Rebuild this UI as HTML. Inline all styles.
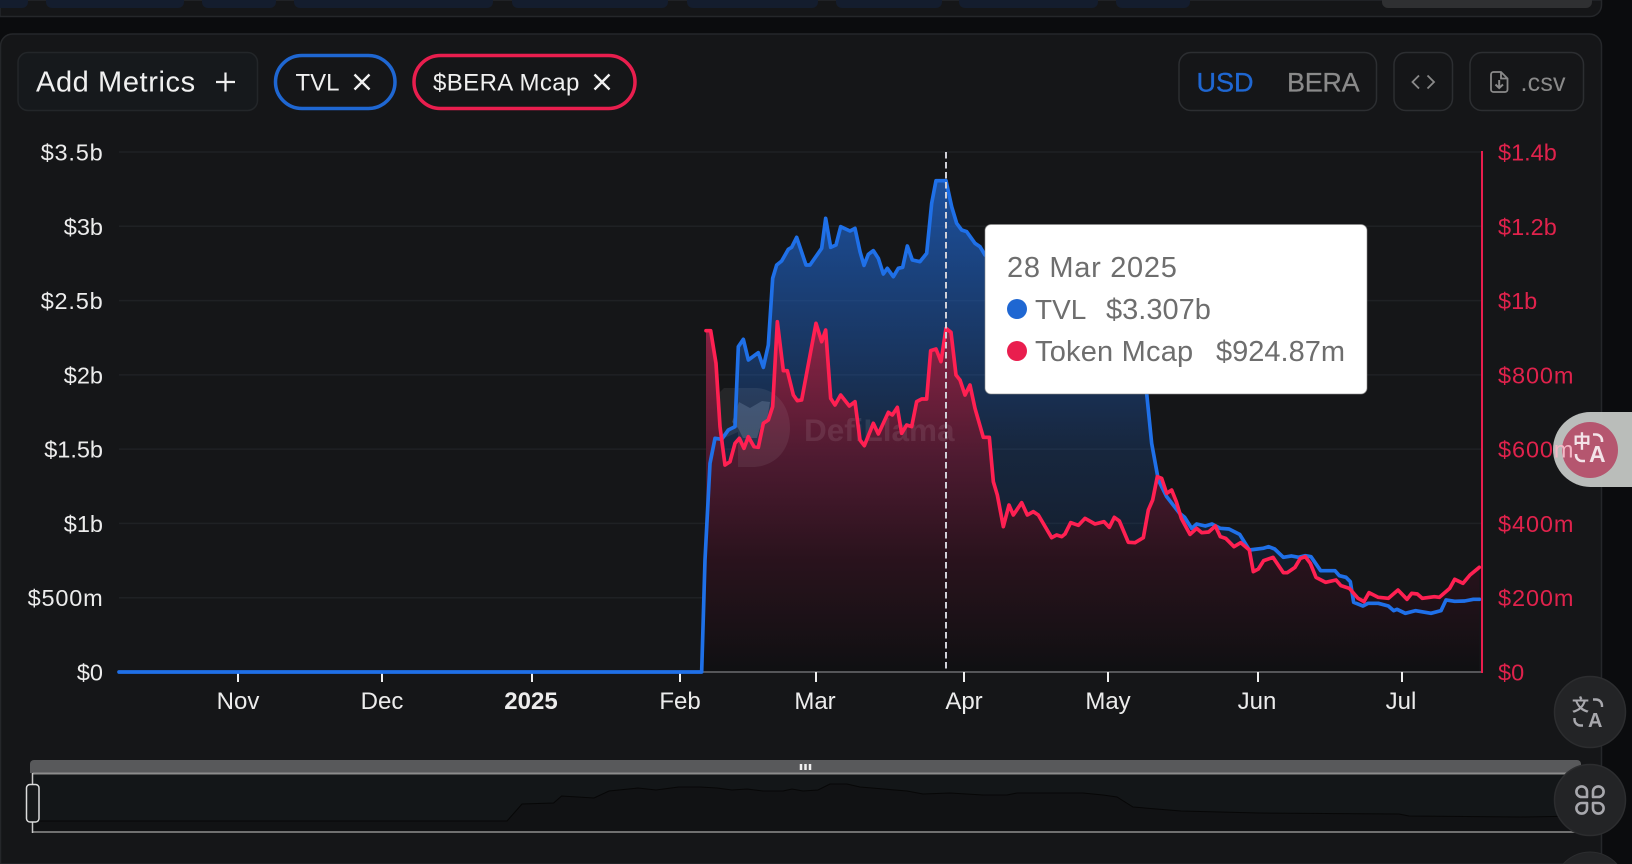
<!DOCTYPE html>
<html><head><meta charset="utf-8"><title>Chart</title>
<style>
html,body{margin:0;padding:0;background:#0b0c0e;width:1632px;height:864px;overflow:hidden}
svg{display:block;font-family:"Liberation Sans","Noto Sans CJK SC",sans-serif}
</style></head><body>
<svg width="1632" height="864" viewBox="0 0 1632 864" xmlns="http://www.w3.org/2000/svg">
<defs>
<linearGradient id="gb" gradientUnits="userSpaceOnUse" x1="0" y1="62" x2="0" y2="1536">
<stop offset="0" stop-color="#1f67d2" stop-opacity=".72"/>
<stop offset=".25" stop-color="#1f67d2" stop-opacity=".48"/>
<stop offset=".55" stop-color="#1f67d2" stop-opacity=".2"/>
<stop offset="1" stop-color="#000" stop-opacity=".3"/>
</linearGradient>
<linearGradient id="gr" gradientUnits="userSpaceOnUse" x1="0" y1="485" x2="0" y2="1536">
<stop offset="0" stop-color="#96234a" stop-opacity=".92"/>
<stop offset=".11" stop-color="#82203e" stop-opacity=".94"/>
<stop offset=".39" stop-color="#501a30" stop-opacity=".96"/>
<stop offset=".68" stop-color="#2a121c" stop-opacity=".97"/>
<stop offset="1" stop-color="#0f1012" stop-opacity=".98"/>
</linearGradient>
<clipPath id="pm"><rect x="1553" y="412" width="40" height="75"/></clipPath>
</defs>

<rect width="1632" height="864" fill="#0b0c0e"/>
<!-- top strip -->
<path d="M0 0H1601.500V5a11.500 11.500 0 0 1 -11.500 11.500H0Z" fill="#151618" stroke="#25272a" stroke-width="1.500"/>
<g fill="#141d2e">
<path d="M0 0H28V2a6 6 0 0 1 -6 6H0Z"/>
<path d="M46 0H184V2a6 6 0 0 1 -6 6H52a6 6 0 0 1 -6 -6Z"/>
<path d="M202 0H276V2a6 6 0 0 1 -6 6H208a6 6 0 0 1 -6 -6Z"/>
<path d="M294 0H493V2a6 6 0 0 1 -6 6H300a6 6 0 0 1 -6 -6Z"/>
<path d="M512 0H668V2a6 6 0 0 1 -6 6H518a6 6 0 0 1 -6 -6Z"/>
<path d="M687 0H818V2a6 6 0 0 1 -6 6H693a6 6 0 0 1 -6 -6Z"/>
<path d="M836 0H942V2a6 6 0 0 1 -6 6H842a6 6 0 0 1 -6 -6Z"/>
<path d="M959 0H1098V2a6 6 0 0 1 -6 6H965a6 6 0 0 1 -6 -6Z"/>
<path d="M1116 0H1190V2a6 6 0 0 1 -6 6H1122a6 6 0 0 1 -6 -6Z"/>
</g>
<path d="M1382 0H1592V2a6 6 0 0 1 -6 6H1388a6 6 0 0 1 -6 -6Z" fill="#2f3032"/>

<!-- panel -->
<path d="M0.500 864V46a12 12 0 0 1 12 -12H1589.500a12 12 0 0 1 12 12V864Z" fill="#151618" stroke="#25272a" stroke-width="1.500"/>

<!-- left controls -->
<rect x="18" y="52.500" width="239.500" height="58" rx="10" fill="#16191c" stroke="#232629" stroke-width="1.500"/>
<text x="36" y="91.500" font-size="29" letter-spacing=".6" fill="#f0f0f0">Add Metrics</text>
<path d="M225.500 72.500V91.500M216 82H235" stroke="#f0f0f0" stroke-width="2.200" fill="none"/>

<rect x="275.500" y="55.500" width="119.500" height="53" rx="26.500" fill="none" stroke="#1f67d2" stroke-width="3.500"/>
<text x="295.500" y="90.500" font-size="24" fill="#f0f0f0">TVL</text>
<path d="M354.500 74.500L369.500 89.500M369.500 74.500L354.500 89.500" stroke="#f0f0f0" stroke-width="2.400" fill="none"/>

<rect x="414" y="55.500" width="221" height="53" rx="26.500" fill="none" stroke="#e91e4e" stroke-width="3.500"/>
<text x="433" y="90.500" font-size="24" letter-spacing=".4" fill="#f0f0f0">$BERA Mcap</text>
<path d="M594.500 74.500L609.500 89.500M609.500 74.500L594.500 89.500" stroke="#f0f0f0" stroke-width="2.400" fill="none"/>

<!-- right controls -->
<rect x="1179" y="52.500" width="197.500" height="58" rx="12" fill="none" stroke="#2c2e31" stroke-width="1.500"/>
<text x="1196.500" y="91.500" font-size="27" fill="#1f67d2" stroke="#1f67d2" stroke-width=".35">USD</text>
<text x="1287" y="91.500" font-size="27" letter-spacing="-.3" fill="#8a8a8a" stroke="#8a8a8a" stroke-width=".25">BERA</text>
<rect x="1394" y="52.500" width="58.500" height="58" rx="12" fill="none" stroke="#2c2e31" stroke-width="1.500"/>
<path d="M1419 75.500L1412.500 82L1419 88.500M1427.500 75.500L1434 82L1427.500 88.500" stroke="#8a8a8a" stroke-width="1.800" fill="none"/>
<rect x="1470" y="52.500" width="113.500" height="58" rx="12" fill="none" stroke="#2c2e31" stroke-width="1.500"/>
<path d="M1493.500 72H1501L1507.500 78.500V89.500a2.500 2.500 0 0 1 -2.500 2.500H1493.500a2.500 2.500 0 0 1 -2.500 -2.500V74.500a2.500 2.500 0 0 1 2.500 -2.500ZM1501 72V78.500H1507.500" fill="none" stroke="#8a8a8a" stroke-width="1.800"/>
<path d="M1499.200 80V87.500M1495.500 84.500L1499.200 88L1503 84.500" fill="none" stroke="#8a8a8a" stroke-width="2"/>
<text x="1520.500" y="91" font-size="25" letter-spacing=".2" fill="#8a8a8a">.csv</text>

<!-- grid -->
<g stroke="#1f2124" stroke-width="1.500">
<path d="M119 152H1481M119 226.300H1481M119 300.600H1481M119 374.900H1481M119 449.100H1481M119 523.400H1481M119 597.700H1481"/>
</g>

<!-- series -->
<g transform="translate(680 160) scale(.33333)" stroke-linejoin="round" stroke-linecap="round">
<path fill="url(#gb)" d="M65 1536L75 1200 90 910 105 835 125 838 145 810 165 800 175 560 190 538 205 600 235 578 250 622 265 555 278 355 290 315 305 303 325 268 335 262 350 232 378 315 390 315 425 265 437 175 452 262 468 255 482 200 510 213 525 205 540 275 552 316 565 283 580 272 595 295 610 342 622 325 640 350 655 325 668 322 682 258 697 300 720 305 740 280 755 130 768 62 798 62 815 140 830 190 845 210 860 215 885 250 900 260 915 285 1100 320 1300 340 1385 400 1400 700 1415 850 1435 960 1460 1010 1499 1060 1514 1072 1535 1105 1550 1092 1576 1098 1596 1092 1621 1105 1647 1107 1679 1123 1708 1170 1749 1165 1766 1160 1784 1167 1810 1192 1835 1188 1856 1192 1876 1187 1893 1190 1922 1232 1965 1232 1978 1247 1998 1252 2011 1265 2021 1327 2049 1338 2064 1330 2095 1330 2125 1338 2141 1352 2151 1348 2176 1360 2207 1352 2253 1360 2283 1352 2298 1320 2324 1324 2354 1323 2380 1318 2398 1318V1536Z"/>
<path fill="url(#gr)" d="M78 1536V512L92 512 108 610 120 800 135 915 150 905 165 850 178 835 192 865 205 830 222 860 235 862 250 790 265 780 278 740 292 485 310 632 322 632 340 705 352 722 365 720 408 490 425 545 437 510 452 715 465 735 482 705 508 738 525 725 540 840 553 857 580 790 595 822 625 757 637 765 652 742 665 820 680 795 695 800 710 725 725 717 740 717 752 572 768 567 783 605 798 505 813 517 828 645 840 660 855 705 870 675 885 745 910 832 928 832 940 965 952 1005 970 1100 987 1035 1000 1065 1025 1028 1042 1065 1060 1055 1075 1065 1115 1133 1130 1125 1145 1130 1155 1122 1172 1088 1195 1096 1215 1075 1245 1092 1272 1085 1288 1102 1303 1072 1318 1083 1345 1147 1365 1148 1390 1133 1405 1050 1418 1020 1432 950 1445 955 1460 1000 1475 990 1489 1025 1504 1075 1530 1123 1550 1105 1565 1118 1586 1116 1606 1098 1621 1130 1637 1135 1662 1160 1682 1148 1708 1170 1720 1235 1735 1227 1751 1202 1779 1192 1810 1238 1822 1238 1845 1222 1861 1195 1876 1190 1891 1210 1908 1252 1937 1267 1968 1260 1983 1277 2008 1285 2034 1315 2052 1325 2067 1298 2095 1312 2125 1315 2154 1290 2181 1318 2195 1300 2212 1302 2227 1315 2263 1310 2278 1312 2309 1285 2324 1258 2349 1270 2370 1245 2398 1222V1536Z"/>
</g>

<!-- watermark -->
<g>
<path d="M724 388H755C775 388 790 405 790 428C790 450 775 467 752 467H738V432L720 440V392Z" fill="#fff" fill-opacity=".07"/>
<path d="M739 402L750 408L762 401L770 402L767 420L760 428L757 438H743L738 428L732 422Z" fill="#8fa8c8" fill-opacity=".25"/>
<text x="804" y="441" font-size="31.500" font-weight="700" fill="#fff" fill-opacity=".09">DefiLlama</text>
</g>

<!-- axis -->
<path d="M119 672H1482" stroke="#555659" stroke-width="2"/>
<path d="M1482 151V673" stroke="#e91e4e" stroke-width="2"/>
<g stroke="#f0f0f0" stroke-width="2">
<path d="M238 672V682M382 672V682M532 672V682M680 672V682M816 672V682M964 672V682M1108 672V682M1258 672V682M1402 672V682"/>
</g>

<!-- lines -->
<g transform="translate(680 160) scale(.33333)" fill="none" stroke-linejoin="round" stroke-linecap="round" stroke-width="11">
<path stroke="#1f70e8" d="M-1683 1536L65 1536 75 1200 90 910 105 835 125 838 145 810 165 800 175 560 190 538 205 600 235 578 250 622 265 555 278 355 290 315 305 303 325 268 335 262 350 232 378 315 390 315 425 265 437 175 452 262 468 255 482 200 510 213 525 205 540 275 552 316 565 283 580 272 595 295 610 342 622 325 640 350 655 325 668 322 682 258 697 300 720 305 740 280 755 130 768 62 798 62 815 140 830 190 845 210 860 215 885 250 900 260 915 285 1100 320 1300 340 1385 400 1400 700 1415 850 1435 960 1460 1010 1499 1060 1514 1072 1535 1105 1550 1092 1576 1098 1596 1092 1621 1105 1647 1107 1679 1123 1708 1170 1749 1165 1766 1160 1784 1167 1810 1192 1835 1188 1856 1192 1876 1187 1893 1190 1922 1232 1965 1232 1978 1247 1998 1252 2011 1265 2021 1327 2049 1338 2064 1330 2095 1330 2125 1338 2141 1352 2151 1348 2176 1360 2207 1352 2253 1360 2283 1352 2298 1320 2324 1324 2354 1323 2380 1318 2398 1318"/>
<path stroke="#ff2052" d="M78 512L92 512 108 610 120 800 135 915 150 905 165 850 178 835 192 865 205 830 222 860 235 862 250 790 265 780 278 740 292 485 310 632 322 632 340 705 352 722 365 720 408 490 425 545 437 510 452 715 465 735 482 705 508 738 525 725 540 840 553 857 580 790 595 822 625 757 637 765 652 742 665 820 680 795 695 800 710 725 725 717 740 717 752 572 768 567 783 605 798 505 813 517 828 645 840 660 855 705 870 675 885 745 910 832 928 832 940 965 952 1005 970 1100 987 1035 1000 1065 1025 1028 1042 1065 1060 1055 1075 1065 1115 1133 1130 1125 1145 1130 1155 1122 1172 1088 1195 1096 1215 1075 1245 1092 1272 1085 1288 1102 1303 1072 1318 1083 1345 1147 1365 1148 1390 1133 1405 1050 1418 1020 1432 950 1445 955 1460 1000 1475 990 1489 1025 1504 1075 1530 1123 1550 1105 1565 1118 1586 1116 1606 1098 1621 1130 1637 1135 1662 1160 1682 1148 1708 1170 1720 1235 1735 1227 1751 1202 1779 1192 1810 1238 1822 1238 1845 1222 1861 1195 1876 1190 1891 1210 1908 1252 1937 1267 1968 1260 1983 1277 2008 1285 2034 1315 2052 1325 2067 1298 2095 1312 2125 1315 2154 1290 2181 1318 2195 1300 2212 1302 2227 1315 2263 1310 2278 1312 2309 1285 2324 1258 2349 1270 2370 1245 2398 1222"/>
</g>

<!-- crosshair -->
<path d="M946 152V672" stroke="#d0d0d8" stroke-width="2" stroke-dasharray="6.500 3.500"/>

<!-- axis labels -->
<g font-size="23.500" fill="#ececec" text-anchor="end">
<text x="103.500" y="160.500" letter-spacing=".8">$3.5b</text>
<text x="103" y="234.800">$3b</text>
<text x="103.500" y="309" letter-spacing=".8">$2.5b</text>
<text x="103" y="383.300">$2b</text>
<text x="103" y="457.600">$1.5b</text>
<text x="103" y="531.800">$1b</text>
<text x="103.500" y="606.100" letter-spacing=".8">$500m</text>
<text x="103" y="680.500">$0</text>
</g>
<g font-size="23.500" fill="#e0224c">
<text x="1498" y="160.500">$1.4b</text>
<text x="1498" y="234.800">$1.2b</text>
<text x="1498" y="309">$1b</text>
<text x="1498" y="383.300" letter-spacing=".9">$800m</text>
<text x="1498" y="457.600" letter-spacing=".9">$600m</text>
<text x="1498" y="531.800" letter-spacing=".9">$400m</text>
<text x="1498" y="606.100" letter-spacing=".9">$200m</text>
<text x="1498" y="680.500">$0</text>
</g>
<g font-size="24" fill="#ececec" text-anchor="middle">
<text x="238" y="709">Nov</text>
<text x="382" y="709">Dec</text>
<text x="531" y="709" font-weight="700">2025</text>
<text x="680" y="709">Feb</text>
<text x="815" y="709">Mar</text>
<text x="964" y="709">Apr</text>
<text x="1108" y="709">May</text>
<text x="1257" y="709">Jun</text>
<text x="1401" y="709">Jul</text>
</g>

<!-- data zoom -->
<path d="M30 773V764a4 4 0 0 1 4 -4H1577a4 4 0 0 1 4 4V773Z" fill="#58595b"/>
<rect x="33" y="774" width="1548" height="58" fill="#131618"/>
<path d="M33 832V821H507L522 804 553.600 803 561.600 796 594 798 609 791 638 788 656 790 678.600 787 700 787 717 788 732 790 747 789 763 791 783 791 792 789 803 791 818 790 830 784 847 784 860 787 907 791 923 794 950 793 983 795 1007 795 1017 793 1083 793 1103 795 1117 797 1133 807 1181 811 1259 813 1399 814 1409 816 1521 817 1581 816V832Z" fill="#111214"/>
<path d="M33 821H507L522 804 553.600 803 561.600 796 594 798 609 791 638 788 656 790 678.600 787 700 787 717 788 732 790 747 789 763 791 783 791 792 789 803 791 818 790 830 784 847 784 860 787 907 791 923 794 950 793 983 795 1007 795 1017 793 1083 793 1103 795 1117 797 1133 807 1181 811 1259 813 1399 814 1409 816 1521 817 1581 816" fill="none" stroke="#070707" stroke-width="1"/>
<path d="M33 773.500H1581" stroke="#8c8c8c" stroke-width="2"/>
<path d="M33 832H1581" stroke="#707070" stroke-width="2"/>
<path d="M32.500 773V833" stroke="#c8c8c8" stroke-width="1.500"/>
<rect x="26.500" y="784.500" width="12.500" height="37.500" rx="3.500" fill="#17191b" stroke="#dcdcdc" stroke-width="1.500"/>
<path d="M801 764V770M805.500 764V770M810 764V770" stroke="#f0f0f0" stroke-width="2.500"/>

<!-- tooltip -->
<rect x="985" y="224.500" width="382" height="169.500" rx="6" fill="#fff" stroke="#8a8a8a" stroke-opacity=".6" stroke-width="1"/>
<text x="1007" y="277" font-size="29" letter-spacing=".7" fill="#6e6e6e">28 Mar 2025</text>
<circle cx="1017" cy="309" r="10" fill="#1f67d2"/>
<text x="1035" y="319" font-size="28" fill="#6e6e6e">TVL</text>
<text x="1106" y="319" font-size="29" fill="#6e6e6e">$3.307b</text>
<circle cx="1017" cy="351" r="10" fill="#e91e4e"/>
<text x="1035" y="361" font-size="29" letter-spacing=".2" fill="#6e6e6e">Token Mcap</text>
<text x="1216" y="361" font-size="29" fill="#6e6e6e">$924.87m</text>

<!-- translate pill -->
<path d="M1632 412H1590.500a37.500 37.500 0 0 0 0 75H1632Z" fill="#c2c5c2" fill-opacity=".96"/>
<circle cx="1590" cy="450" r="28" fill="#b5566f"/>
<text x="1498" y="457.600" font-size="23.500" letter-spacing=".9" fill="#f4b8c6" clip-path="url(#pm)">$600m</text>
<text x="1573" y="448" font-size="18" font-weight="700" fill="#f3e3e8">中</text>
<text x="1589" y="462" font-size="23" font-weight="700" fill="#f3e3e8">A</text>
<path d="M1593 434.500h3a6 6 0 0 1 6 6v1.500M1576 454v1a6 6 0 0 0 6 6h3" fill="none" stroke="#f3e3e8" stroke-width="2.600"/>

<!-- float buttons -->
<circle cx="1590" cy="712" r="35.500" fill="#232426" stroke="#2c2d2f" stroke-width="1.500"/>
<text x="1572" y="711" font-size="17" font-weight="700" fill="#a8a8ad">文</text>
<text x="1588" y="727" font-size="20" font-weight="700" fill="#a8a8ad">A</text>
<path d="M1593 699.500h3a6 6 0 0 1 6 6v1.500M1574.500 718v1.500a6 6 0 0 0 6 6h2.500" fill="none" stroke="#a8a8ad" stroke-width="2.400"/>

<circle cx="1590" cy="800" r="35.500" fill="#232426" stroke="#2c2d2f" stroke-width="1.500"/>
<g transform="translate(1590 800)" fill="none" stroke="#a8a8ad" stroke-width="2.600" stroke-linejoin="round">
<path d="M-3 -3H-8.300A5.300 5.300 0 1 1 -3 -8.300Z"/>
<path d="M-3 -3H-8.300A5.300 5.300 0 1 1 -3 -8.300Z" transform="rotate(90)"/>
<path d="M-3 -3H-8.300A5.300 5.300 0 1 1 -3 -8.300Z" transform="rotate(180)"/>
<path d="M-3 -3H-8.300A5.300 5.300 0 1 1 -3 -8.300Z" transform="rotate(270)"/>
</g>

<path d="M1563.200 864A36 36 0 0 1 1616.800 864Z" fill="#232426" stroke="#2c2d2f" stroke-width="1"/>
</svg>
</body></html>
